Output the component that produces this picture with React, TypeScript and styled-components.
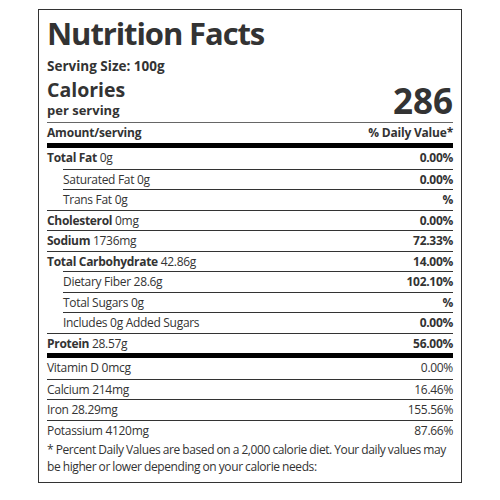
import React from "react";
import styled, { createGlobalStyle } from "styled-components";

const GlobalStyle = createGlobalStyle`
  body {
    margin: 0;
    background: #ffffff;
    font-family: "Open Sans", "DejaVu Sans", sans-serif;
    color: #333333;
  }
`;

const Page = styled.div`
  padding-top: 9px;
`;

const Label = styled.section`
  width: 424px;
  margin: 0 auto;
  border: 1px solid #333333;
  box-sizing: border-box;
  padding: 0 8px 7px 8px;
`;

const Title = styled.h1`
  margin: 0;
  font-size: 31px;
  font-weight: 700;
  line-height: 46px;
  letter-spacing: -1.1px;
`;

const Serving = styled.div`
  font-size: 13.5px;
  font-weight: 700;
  line-height: 20px;
`;

const CaloriesRow = styled.div`
  display: flex;
  justify-content: space-between;
  align-items: flex-end;
  padding: 3px 0 3px 0;
  border-bottom: 1px solid #666666;
`;

const CaloriesText = styled.div`
  display: flex;
  flex-direction: column;
`;

const CaloriesLabel = styled.span`
  font-size: 19.5px;
  font-weight: 700;
  line-height: 22px;
`;

const PerServing = styled.span`
  font-size: 13px;
  font-weight: 700;
  line-height: 18px;
`;

const CaloriesValue = styled.span`
  font-size: 35px;
  font-weight: 700;
  line-height: 36px;
`;

const HeaderRow = styled.div`
  display: flex;
  justify-content: space-between;
  font-size: 12px;
  font-weight: 700;
  letter-spacing: -0.2px;
  line-height: 20px;
`;

const ThickBar = styled.div`
  height: 5px;
  background: #000000;
`;

const Row = styled.div<{ $indent?: boolean; $first?: boolean }>`
  display: flex;
  justify-content: space-between;
  margin-left: ${(p) => (p.$indent ? "16px" : "0")};
  border-top: ${(p) => (p.$first ? "none" : "1px solid #333333")};
  font-size: 12px;
  letter-spacing: -0.3px;
  line-height: ${(p) => (p.$first ? "20.5px" : "19.5px")};
`;

const Name = styled.span<{ $bold?: boolean }>`
  font-weight: ${(p) => (p.$bold ? 700 : 400)};
`;

const Amount = styled.span`
  font-weight: 400;
`;

const Percent = styled.span<{ $bold?: boolean }>`
  font-weight: ${(p) => (p.$bold ? 700 : 400)};
`;

const Footnote = styled.p`
  margin: 0;
  font-size: 12px;
  letter-spacing: -0.4px;
  word-spacing: -0.3px;
  line-height: 17px;
  padding-top: 1px;
`;

type Nutrient = {
  name: string;
  amount: string;
  percent: string;
  bold?: boolean;
  indent?: boolean;
};

const nutrients: Nutrient[] = [
  { name: "Total Fat", amount: "0g", percent: "0.00%", bold: true },
  { name: "Saturated Fat 0g", amount: "", percent: "0.00%", indent: true },
  { name: "Trans Fat 0g", amount: "", percent: "%", indent: true },
  { name: "Cholesterol", amount: "0mg", percent: "0.00%", bold: true },
  { name: "Sodium", amount: "1736mg", percent: "72.33%", bold: true },
  { name: "Total Carbohydrate", amount: "42.86g", percent: "14.00%", bold: true },
  { name: "Dietary Fiber 28.6g", amount: "", percent: "102.10%", indent: true },
  { name: "Total Sugars 0g", amount: "", percent: "%", indent: true },
  { name: "Includes 0g Added Sugars", amount: "", percent: "0.00%", indent: true },
  { name: "Protein", amount: "28.57g", percent: "56.00%", bold: true },
];

const vitamins = [
  { name: "Vitamin D 0mcg", percent: "0.00%" },
  { name: "Calcium 214mg", percent: "16.46%" },
  { name: "Iron 28.29mg", percent: "155.56%" },
  { name: "Potassium 4120mg", percent: "87.66%" },
];

export default function App() {
  return (
    <Page>
      <GlobalStyle />
      <Label>
        <Title>Nutrition Facts</Title>
        <Serving>Serving Size: 100g</Serving>
        <CaloriesRow>
          <CaloriesText>
            <CaloriesLabel>Calories</CaloriesLabel>
            <PerServing>per serving</PerServing>
          </CaloriesText>
          <CaloriesValue>286</CaloriesValue>
        </CaloriesRow>
        <HeaderRow>
          <span>Amount/serving</span>
          <span>% Daily Value*</span>
        </HeaderRow>
        <ThickBar />
        {nutrients.map((n, i) => (
          <Row key={n.name} $indent={n.indent} $first={i === 0}>
            <span>
              <Name $bold={n.bold}>{n.name}</Name>
              {n.amount && <Amount> {n.amount}</Amount>}
            </span>
            <Percent $bold>{n.percent}</Percent>
          </Row>
        ))}
        <ThickBar />
        {vitamins.map((v, i) => (
          <Row key={v.name} $first={i === 0}>
            <span>{v.name}</span>
            <Percent>{v.percent}</Percent>
          </Row>
        ))}
        <Footnote>
          * Percent Daily Values are based on a 2,000 calorie diet. Your daily
          values may be higher or lower depending on your calorie needs:
        </Footnote>
      </Label>
    </Page>
  );
}
